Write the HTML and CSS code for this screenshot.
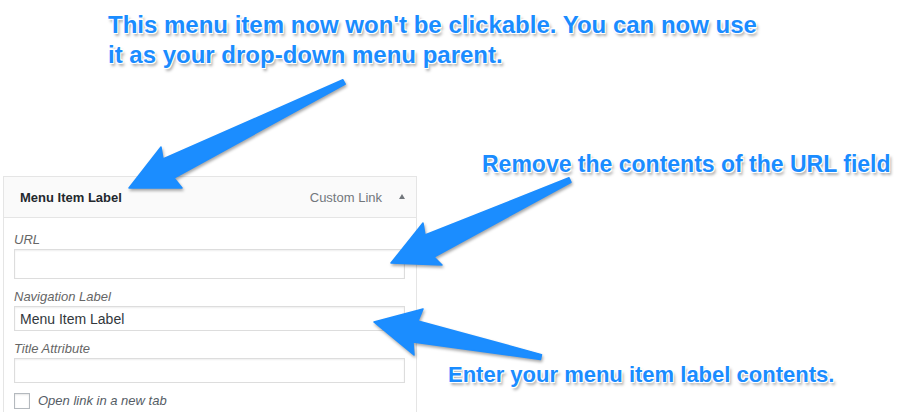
FILE: index.html
```html
<!DOCTYPE html>
<html lang="en">
<head>
    <meta charset="UTF-8">
    <meta name="viewport" content="width=device-width, initial-scale=1.0">
    <title>Menu item settings</title>
    <link rel="stylesheet" href="styles.css">
</head>
<body>
<div class="canvas">

    <p class="note note-top">This menu item now won't be clickable. You can now use<br>it as your drop-down menu parent.</p>

    <div class="workspace">
        <!-- menu item box -->
        <div class="menu-item">
            <div class="item-bar">
                <span class="item-title">Menu Item Label</span>
                <span class="item-type">Custom Link</span>
                <span class="item-toggle"></span>
            </div>
            <div class="item-settings">
                <p class="field field-url">
                    <label for="url">URL</label>
                    <input type="text" id="url" value="">
                </p>
                <p class="field">
                    <label for="nav-label">Navigation Label</label>
                    <input type="text" id="nav-label" value="Menu Item Label">
                </p>
                <p class="field">
                    <label for="title-attr">Title Attribute</label>
                    <input type="text" id="title-attr" value="">
                </p>
                <p class="check-row">
                    <input type="checkbox" id="new-tab">
                    <label for="new-tab">Open link in a new tab</label>
                </p>
            </div>
        </div>

        <div class="side">
            <p class="note note-url">Remove the contents of the URL field</p>
            <p class="note note-label">Enter your menu item label contents.</p>
        </div>
    </div>

    <!-- callout arrows drawn over the screenshot -->
    <svg class="arrows" width="923" height="412" viewBox="0 0 923 412">
        <polygon points="342.9,79.8 163,159 161,147 129,188 182,188 174,178 345.2,84.2" />
        <polygon points="569,177.7 425,235 423,223 391,263 442,265 434,257 571,182.3" />
        <polygon points="541.5,354.6 418,321 423,309 374,322 414,355 413,342 540.5,359.4" />
    </svg>
</div>
</body>
</html>
```

FILE: styles.css
```css
* {
    box-sizing: border-box;
}

html, body {
    margin: 0;
    height: 412px;
    overflow: hidden;
    background: #fff;
}

body {
    font-family: "Liberation Sans", Arial, sans-serif;
}

.canvas {
    position: relative;
    width: 923px;
    height: 412px;
    overflow: hidden;
}

/* blue annotation text */
.note {
    margin: 0;
    font-size: 23px;
    font-weight: 700;
    line-height: 30px;
    color: #1a8cff;
    white-space: nowrap;
    text-shadow: -1px -1px 0 #fff, 1px -1px 0 #fff, -1px 1px 0 #fff, 1px 1px 0 #fff,
        2px 3px 3px rgba(0, 0, 0, 0.35);
}

.note-top {
    padding: 10px 0 0 108px;
    font-size: 24px;
}

.workspace {
    display: flex;
    margin-top: 79px;
}

.side {
    display: flex;
    flex-direction: column;
}

.note-url {
    margin-left: 65px;
}

.note-label {
    margin-left: 31px;
    margin-top: 181px;
    font-size: 22px;
}

/* menu item panel */
.menu-item {
    flex: none;
    width: 414px;
    height: 236px;
    margin: 27px 0 0 3px;
    border: 1px solid #e5e5e5;
    border-bottom: 0;
    background: #fff;
}

.item-bar {
    display: flex;
    align-items: center;
    height: 41px;
    padding: 0 11px 0 16px;
    background: #fafafa;
    border-bottom: 1px solid #e5e5e5;
    font-size: 13px;
}

.item-title {
    flex: 1;
    font-weight: 700;
    color: #23282d;
}

.item-type {
    color: #72777c;
}

.item-toggle {
    width: 0;
    height: 0;
    margin-left: 17px;
    margin-top: -2px;
    border-left: 3.5px solid transparent;
    border-right: 3.5px solid transparent;
    border-bottom: 5px solid #72777c;
}

.item-settings {
    padding: 13px 11px 0 10px;
}

.field {
    margin: 0 0 9px;
}

.field label {
    display: block;
    font-size: 13px;
    line-height: 18px;
    font-style: italic;
    color: #666;
}

.field input {
    display: block;
    width: 100%;
    height: 25px;
    margin: 0;
    padding: 0 5px;
    border: 1px solid #ddd;
    border-radius: 0;
    box-shadow: inset 0 1px 2px rgba(0, 0, 0, 0.07);
    font-family: "Liberation Sans", Arial, sans-serif;
    font-size: 14px;
    color: #32373c;
    background: #fff;
}

.field-url input {
    height: 30px;
}

.check-row {
    display: flex;
    align-items: center;
    gap: 8px;
    margin: 0;
}

.check-row input {
    appearance: none;
    width: 16px;
    height: 16px;
    margin: 0;
    border: 1px solid #b4b9be;
    background: #fff;
    box-shadow: inset 0 1px 2px rgba(0, 0, 0, 0.1);
}

.check-row label {
    font-size: 13px;
    line-height: 18px;
    font-style: italic;
    color: #555d66;
}

/* arrows sit over everything */
.arrows {
    position: absolute;
    top: 0;
    left: 0;
    pointer-events: none;
    filter: drop-shadow(1px 2px 1.5px rgba(0, 0, 0, 0.35));
}

.arrows polygon {
    fill: #1b8dff;
    stroke: #1b8dff;
    stroke-width: 1.5;
    stroke-linejoin: round;
}
```
